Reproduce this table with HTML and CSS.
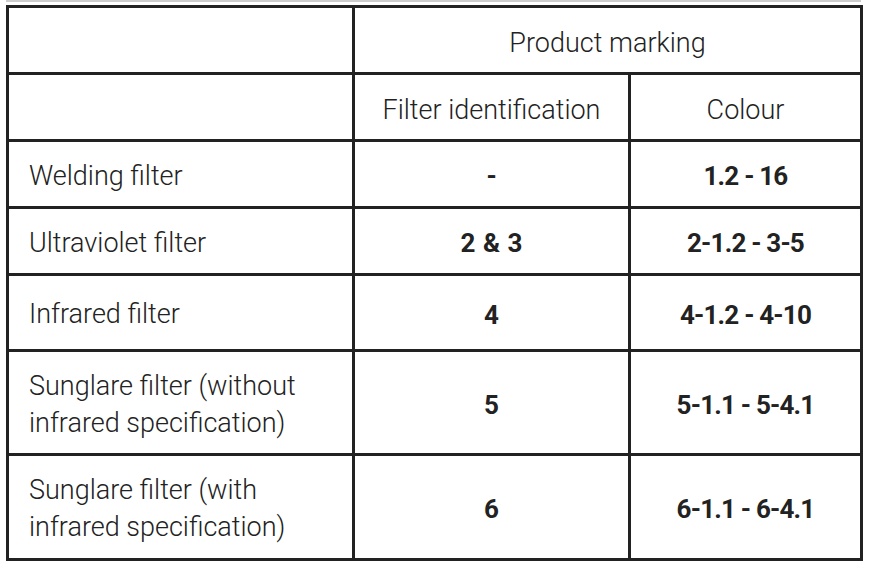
FILE: index.html
```html
<!DOCTYPE html>
<html>
<head>
<meta charset="utf-8">
<link rel="stylesheet" href="styles.css">
</head>
<body>
<div class="strip"></div>
<div class="table">
  <div class="cell"></div>
  <div class="cell head span2">Product marking</div>
  <div class="cell"></div>
  <div class="cell head">Filter identification</div>
  <div class="cell head">Colour</div>

  <div class="cell label">Welding filter</div>
  <div class="cell val id">-</div>
  <div class="cell val">1.2 - 16</div>

  <div class="cell label">Ultraviolet filter</div>
  <div class="cell val id">2 &amp; 3</div>
  <div class="cell val">2-1.2 - 3-5</div>

  <div class="cell label">Infrared filter</div>
  <div class="cell val id">4</div>
  <div class="cell val">4-1.2 - 4-10</div>

  <div class="cell label">Sunglare filter (without<br>infrared specification)</div>
  <div class="cell val id">5</div>
  <div class="cell val">5-1.1 - 5-4.1</div>

  <div class="cell label">Sunglare filter (with<br>infrared specification)</div>
  <div class="cell val id">6</div>
  <div class="cell val">6-1.1 - 6-4.1</div>
</div>
</body>
</html>
```

FILE: styles.css
```css
html, body {
  margin: 0;
  padding: 0;
  background: #ffffff;
}

body {
  font-family: Roboto, "Liberation Sans", sans-serif;
  color: #222222;
}

.strip {
  height: 2px;
  width: 855px;
  margin-left: 6px;
  background: #cccccc;
}

.table {
  margin-top: 3px;
  margin-left: 6px;
  width: 857px;
  box-sizing: border-box;
  border-top: 3px solid #222222;
  border-left: 3px solid #222222;
  display: grid;
  grid-template-columns: 346px 276px 232px;
  grid-template-rows: 67px 67px 67px 67px 76px 104px 105px;
}

.cell {
  box-sizing: border-box;
  border-right: 3px solid #222222;
  border-bottom: 3px solid #222222;
  display: flex;
  align-items: center;
  font-size: 27px;
  font-weight: 300;
  line-height: 37px;
}

.span2 {
  grid-column: span 2;
}

.head {
  justify-content: center;
  padding-top: 7px;
}

.label {
  padding-left: 20px;
  padding-top: 4px;
}

.val {
  justify-content: center;
  font-weight: 700;
  font-size: 26px;
  letter-spacing: -0.8px;
  padding-top: 5px;
}

.val.id {
  letter-spacing: 0;
  word-spacing: 1px;
}
```
